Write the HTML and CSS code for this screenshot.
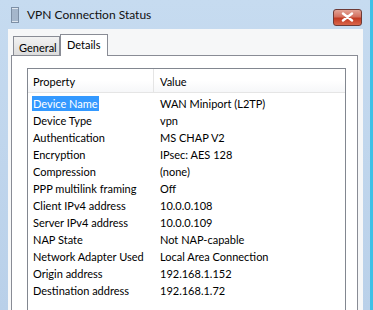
FILE: index.html
```html
<!DOCTYPE html>
<html lang="en">
<head>
  <meta charset="UTF-8">
  <title>VPN Connection Status</title>
  <link rel="stylesheet" href="styles.css">
</head>
<body>
  <div class="window">
    <!-- Title bar -->
    <div class="titlebar">
      <svg class="app-icon" width="8" height="16" viewBox="0 0 8 16">
        <rect x="0.5" y="0.5" width="7" height="15" fill="#dfe6ee" stroke="#7d8fa5"/>
        <path d="M1 3h6M1 5h6M1 7h6M1 9h6M1 11h6M1 13h6" stroke="#6b86a8" stroke-width="1"/>
      </svg>
      <span class="title">VPN Connection Status</span>
      <div class="close">
        <svg width="13" height="10" viewBox="0 0 13 10">
          <path d="M2 1.5l9 7M11 1.5l-9 7" stroke="#fff" stroke-width="2.4" stroke-linecap="round"/>
        </svg>
      </div>
    </div>

    <!-- Client area -->
    <div class="client">
      <div class="tabs">
        <div class="tab">General</div>
        <div class="tab active">Details</div>
      </div>
      <div class="panel">
        <div class="listview">
          <div class="header">
            <div class="col prop">Property</div>
            <div class="col">Value</div>
          </div>
          <div class="rows">
            <div class="row"><div class="prop"><span class="selected">Device Name</span></div><div>WAN Miniport (L2TP)</div></div>
            <div class="row"><div class="prop">Device Type</div><div>vpn</div></div>
            <div class="row"><div class="prop">Authentication</div><div>MS CHAP V2</div></div>
            <div class="row"><div class="prop">Encryption</div><div>IPsec: AES 128</div></div>
            <div class="row"><div class="prop">Compression</div><div>(none)</div></div>
            <div class="row"><div class="prop">PPP multilink framing</div><div>Off</div></div>
            <div class="row"><div class="prop">Client IPv4 address</div><div>10.0.0.108</div></div>
            <div class="row"><div class="prop">Server IPv4 address</div><div>10.0.0.109</div></div>
            <div class="row"><div class="prop">NAP State</div><div>Not NAP-capable</div></div>
            <div class="row"><div class="prop">Network Adapter Used</div><div>Local Area Connection</div></div>
            <div class="row"><div class="prop">Origin address</div><div>192.168.1.152</div></div>
            <div class="row"><div class="prop">Destination address</div><div>192.168.1.72</div></div>
          </div>
        </div>
      </div>
    </div>
  </div>
</body>
</html>
```

FILE: styles.css
```css
body {
  margin: 0;
  overflow: hidden;
  font-family: 'Lato', 'Liberation Sans', sans-serif;
  font-size: 11px;
  color: #000;
}

.window {
  width: 373px;
  height: 310px;
  display: flex;
  flex-direction: column;
  background: linear-gradient(180deg, #c6dbf0, #b9d0e9);
  border-right: 3px solid #3fc1e6;
  box-sizing: border-box;
}

/* Title bar */
.titlebar {
  height: 29px;
  display: flex;
  align-items: center;
  padding-left: 11px;
  flex-shrink: 0;
}

.app-icon {
  margin-right: 8px;
}

.title {
  font-size: 12px;
  flex: 1;
  color: #111;
}

.close {
  width: 29px;
  height: 17px;
  margin-right: 8px;
  margin-top: 5px;
  border: 1px solid #6d3a36;
  border-radius: 3px;
  box-sizing: border-box;
  background: linear-gradient(180deg, #e3a396 0%, #d3705f 45%, #c23a22 55%, #d9664a 100%);
  display: flex;
  align-items: center;
  justify-content: center;
}

/* Client area */
.client {
  flex: 1;
  margin-left: 8px;
  margin-right: 7px;
  background: #f6f7f8;
  padding: 5px 5px 0 3px;
  display: flex;
  flex-direction: column;
}

.tabs {
  display: flex;
  align-items: flex-end;
  height: 21px;
  padding-left: 2px;
  position: relative;
  z-index: 1;
}

.tab {
  height: 19px;
  width: 47px;
  box-sizing: border-box;
  border: 1px solid #898c95;
  border-bottom: none;
  background: linear-gradient(180deg, #f2f2f2, #dcdcdc);
  padding: 4px 0 0 5px;
}

.tab.active {
  height: 22px;
  width: 48px;
  margin-bottom: -1px;
  background: #fff;
  padding: 3px 0 0 6px;
}

.panel {
  flex: 1;
  background: #fff;
  border: 1px solid #898c95;
  border-bottom: none;
  padding: 12px 11px 0 15px;
  display: flex;
}

.listview {
  flex: 1;
  border: 1px solid #828790;
  border-bottom: none;
  background: #fff;
}

.header {
  display: flex;
  height: 23px;
  border-bottom: 1px solid #e5e5e5;
  background: linear-gradient(180deg, #fff 0%, #fff 50%, #f6f7f9 100%);
}

.col {
  display: flex;
  align-items: center;
  padding-top: 2px;
}

.prop {
  width: 120px;
  padding-left: 5px;
  flex-shrink: 0;
}

.header .prop {
  border-right: 1px solid #e5e5e5;
}

.header .col + .col {
  padding-left: 6px;
}

.rows {
  padding-top: 2px;
}

.row {
  display: flex;
  height: 17px;
  align-items: center;
}

.row > div + div {
  padding-left: 7px;
}

.selected {
  background: #3399ff;
  color: #fff;
  padding: 1px 1px;
  margin-left: -1px;
}
```
